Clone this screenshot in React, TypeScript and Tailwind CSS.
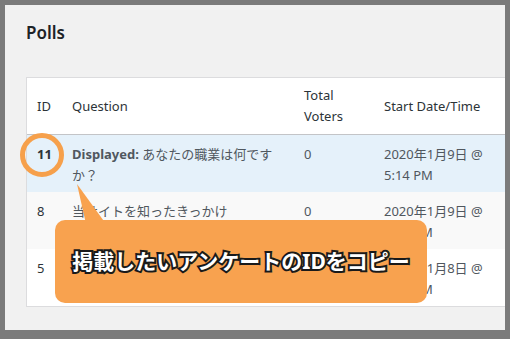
const rows = [
  { id: '11', label: 'Displayed:', q: 'あなたの職業は何ですか？', voters: '0', date: '2020年1月9日 @', time: '5:14 PM', active: true },
  { id: '8', label: '', q: '当サイトを知ったきっかけ', voters: '0', date: '2020年1月9日 @', time: '5:14 PM', active: false },
  { id: '5', label: '', q: '好きな季節は？', voters: '0', date: '2020年1月8日 @', time: '3:02 PM', active: false },
]

export default function App() {
  return (
    <div className="relative w-[510px] h-[339px] overflow-hidden bg-[#7b7b7b] pt-[5px] pl-[5px] pr-[5px] pb-[9px] font-['Noto_Sans','Noto_Sans_CJK_JP',sans-serif]">
      <div className="h-full bg-[#f1f1f1] pl-[21px] pt-[17px] overflow-hidden">
        <h1 className="text-[17px] leading-[22px] font-semibold text-[#1d2327]">Polls</h1>

        <div className="mt-[33px] w-[520px] border border-[#dcdcde] bg-white text-[13px] leading-[21px]">
          <div className="grid grid-cols-[35px_232px_80px_1fr] h-[57px] items-center border-b border-[#c3c4c7] text-[#2c3338]">
            <div className="px-[10px]">ID</div>
            <div className="px-[10px]">Question</div>
            <div className="px-[10px]">Total<br />Voters</div>
            <div className="px-[10px]">Start Date/Time</div>
          </div>
          {rows.map((r) => (
            <div
              key={r.id}
              className={`grid grid-cols-[35px_232px_80px_1fr] h-[57px] pt-[9px] text-[#50575e] ${r.active ? 'bg-[#e5f1fa]' : r.id === '8' ? 'bg-[#f9f9f9]' : 'bg-white'}`}
            >
              <div className={`px-[10px] ${r.active ? 'font-bold text-[#2c3338]' : 'text-[#2c3338]'}`}>{r.id}</div>
              <div className="px-[10px]">
                {r.label && <span className="font-bold">{r.label} </span>}
                {r.q}
              </div>
              <div className="px-[10px]">{r.voters}</div>
              <div className="px-[10px]">
                {r.date}
                <br />
                {r.time}
              </div>
            </div>
          ))}
        </div>
      </div>

      {/* annotations */}
      <svg className="absolute left-0 top-0" width="510" height="339">
        <circle cx="42" cy="155" r="19.5" fill="none" stroke="#f6a04b" strokeWidth="5" />
        <polygon points="77,184 86,224 106,224" fill="#f8a24f" />
      </svg>
      <div className="absolute left-[55px] top-[220px] w-[372px] h-[83px] rounded-[10px] bg-[#f8a24f] flex items-center justify-center">
        <span className="text-[21px] font-bold text-white [paint-order:stroke_fill] [-webkit-text-stroke:4px_#1a1a1a]">
          掲載したいアンケートのIDをコピー
        </span>
      </div>
    </div>
  )
}
